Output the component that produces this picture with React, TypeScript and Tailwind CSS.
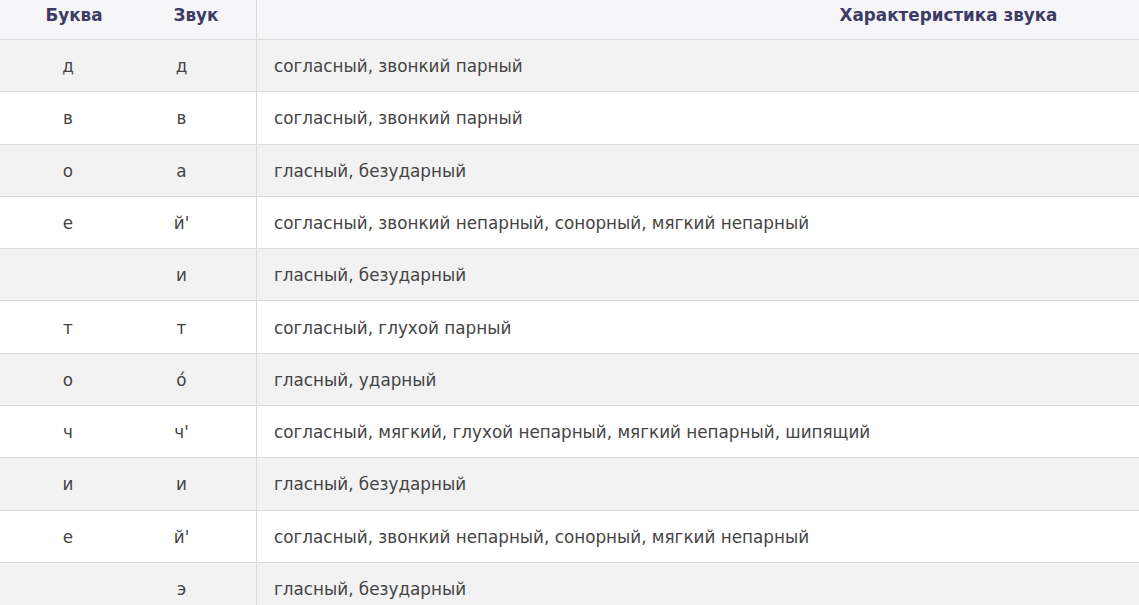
import React from 'react';

type Row = { letter: string; sound: string; desc: string };

const ROWS: Row[] = [
  { letter: 'д', sound: 'д', desc: 'согласный, звонкий парный' },
  { letter: 'в', sound: 'в', desc: 'согласный, звонкий парный' },
  { letter: 'о', sound: 'а', desc: 'гласный, безударный' },
  { letter: 'е', sound: "й'", desc: 'согласный, звонкий непарный, сонорный, мягкий непарный' },
  { letter: '', sound: 'и', desc: 'гласный, безударный' },
  { letter: 'т', sound: 'т', desc: 'согласный, глухой парный' },
  { letter: 'о', sound: 'о́', desc: 'гласный, ударный' },
  { letter: 'ч', sound: "ч'", desc: 'согласный, мягкий, глухой непарный, мягкий непарный, шипящий' },
  { letter: 'и', sound: 'и', desc: 'гласный, безударный' },
  { letter: 'е', sound: "й'", desc: 'согласный, звонкий непарный, сонорный, мягкий непарный' },
  { letter: '', sound: 'э', desc: 'гласный, безударный' },
];

export default function App() {
  return (
    <div className="w-[1139px] h-[605px] overflow-hidden bg-white font-['DejaVu_Sans',Verdana,sans-serif]">
      <div className="w-[1640px]">
        {/* шапка таблицы */}
        <div className="grid grid-cols-[136px_121px_1fr] h-[40px] bg-[#f6f6f8] border-b border-[#d9d9d9] text-[16.8px] font-bold text-[#3d3b66]">
          <div className="flex items-center justify-center pb-[8px] pl-[12px]">Буква</div>
          <div className="flex items-center justify-center pb-[8px] border-r border-[#d9d9d9]">Звук</div>
          <div className="flex items-center justify-center pb-[8px]">Характеристика звука</div>
        </div>

        {ROWS.map((r, i) => (
          <div
            key={i}
            className={`grid grid-cols-[136px_121px_1fr] h-[52.3px] border-b border-[#dcdcdc] text-[16.8px] text-[#444] ${
              i % 2 === 0 ? 'bg-[#f2f2f2]' : 'bg-white'
            }`}
          >
            <div className="flex items-center justify-center pt-[2px]">{r.letter}</div>
            <div className="flex items-center justify-center pt-[2px] pr-[29px] border-r border-[#d9d9d9]">{r.sound}</div>
            <div className="flex items-center pt-[2px] pl-[17px]">{r.desc}</div>
          </div>
        ))}
      </div>
    </div>
  );
}
